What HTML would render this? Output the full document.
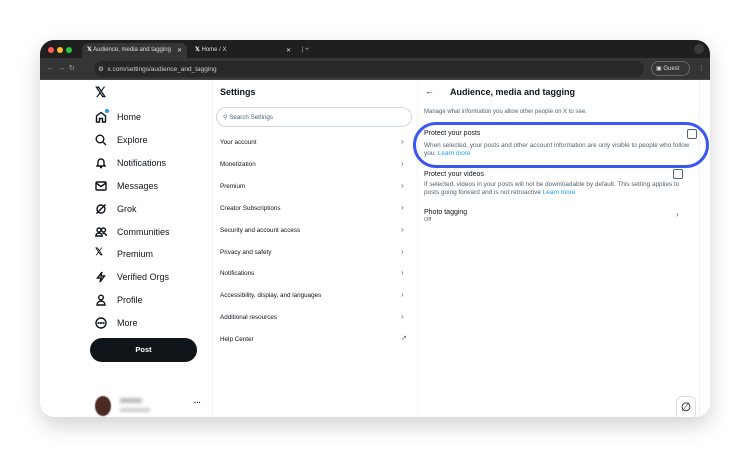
<!DOCTYPE html>
<html><head><style>
*{box-sizing:border-box;margin:0;padding:0}
body{width:750px;height:457px;background:#fff;font-family:"Liberation Sans",Arial,sans-serif;position:relative;overflow:hidden;color:#0f1419}
.win{position:absolute;left:40px;top:40px;width:670px;height:377px;border-radius:14px;overflow:hidden;background:#fff;box-shadow:0 8px 22px rgba(0,0,0,.18)}
.tabs{position:absolute;left:0;top:0;width:670px;height:18px;background:#1f1f1f}
.addr{position:absolute;left:0;top:18px;width:670px;height:22px;background:#353535;border-bottom:1px solid #444}
.dot{position:absolute;top:7px;width:6px;height:6px;border-radius:50%}
.tab{position:absolute;top:3px;height:15px;font-size:6px;color:#ddd;line-height:15px;overflow:hidden;white-space:nowrap}
.a{position:absolute;font-size:6.5px;white-space:nowrap}
.nav{position:absolute;left:77px;font-size:9px;color:#0f1419}
.set{position:absolute;left:180px;font-size:6.3px;color:#0f1419}
.chev{position:absolute;left:361px;font-size:8px;color:#536471}
svg{position:absolute;left:55px;width:12px;height:12px;fill:none;stroke:#0f1419;stroke-width:1.4}
</style></head><body>
<div class="win">
<div class="tabs">
<div class="dot" style="left:8px;background:#ff5f57"></div>
<div class="dot" style="left:17px;background:#febc2e"></div>
<div class="dot" style="left:26px;background:#28c840"></div>
<div class="tab" style="left:42px;width:105px;background:#353535;border-radius:6px 6px 0 0;padding-left:5px"><b style="color:#fff">𝕏</b> Audience, media and tagging</div>
<div class="a" style="left:137px;top:7px;color:#ddd;font-size:6px">✕</div>
<div class="tab" style="left:152px;width:105px;padding-left:3px"><b style="color:#fff">𝕏</b> Home / X</div>
<div class="a" style="left:246px;top:7px;color:#ddd;font-size:6px">✕</div>
<div class="tab" style="left:262px;color:#bbb">| +</div>
<div style="position:absolute;right:6px;top:4px;width:10px;height:10px;border-radius:50%;background:#3a3a3a"></div>
</div>
<div class="addr">
<div class="a" style="left:7px;top:6px;color:#aaa;font-size:7px">←&nbsp;&nbsp;→&nbsp;&nbsp;↻</div>
<div style="position:absolute;left:54px;top:3px;width:550px;height:16px;border-radius:8px;background:#282828"></div>
<div class="a" style="left:58px;top:7px;color:#ccc">⚙&nbsp; x.com/settings/audience_and_tagging</div>
<div style="position:absolute;left:611px;top:3px;width:39px;height:15px;border-radius:8px;border:1px solid #666"></div>
<div class="a" style="left:616px;top:7px;color:#ddd;font-size:6px">▣ Guest</div>
<div class="a" style="left:658px;top:6px;color:#aaa">⋮</div>
</div>
<div style="position:absolute;left:172px;top:40px;width:1px;height:337px;background:#eff3f4"></div>
<div style="position:absolute;left:377px;top:40px;width:1px;height:337px;background:#eff3f4"></div>
<div style="position:absolute;left:659px;top:40px;width:1px;height:337px;background:#eff3f4"></div>
<div class="a" style="left:55px;top:44px;font-size:14px;font-weight:bold">𝕏</div>
<svg style="top:71px" viewBox="0 0 12 12"><path d="M1.5 11V5L6 1.5 10.5 5V11H7.5V7.5H4.5V11Z"/></svg>
<div style="position:absolute;left:65px;top:69px;width:4px;height:4px;border-radius:50%;background:#1d9bf0"></div>
<div class="nav" style="top:72px">Home</div>
<svg style="top:94px" viewBox="0 0 12 12"><circle cx="5" cy="5" r="3.8"/><path d="M8 8l3 3"/></svg><div class="nav" style="top:95px">Explore</div>
<svg style="top:117px" viewBox="0 0 12 12"><path d="M2 9h8L9 7.5V5a3 3 0 0 0-6 0v2.5Z M5 10.5h2"/></svg><div class="nav" style="top:118px">Notifications</div>
<svg style="top:140px" viewBox="0 0 12 12"><rect x="1" y="2" width="10" height="8" rx="1"/><path d="M1 3l5 3.5L11 3"/></svg><div class="nav" style="top:141px">Messages</div>
<svg style="top:163px" viewBox="0 0 12 12"><circle cx="6" cy="6" r="4"/><path d="M10.5 1.5L1.5 10.5"/></svg><div class="nav" style="top:164px">Grok</div>
<svg style="top:186px" viewBox="0 0 12 12"><circle cx="4" cy="4" r="2"/><circle cx="8.5" cy="4" r="2"/><path d="M0.8 10a3.2 3 0 0 1 6.4 0Z M7.5 7.5a3 3 0 0 1 4 2.5"/></svg><div class="nav" style="top:187px">Communities</div>
<div class="a" style="left:55px;top:207px;font-size:10px;font-weight:bold">𝕏</div><div class="nav" style="top:209px">Premium</div>
<svg style="top:231px" viewBox="0 0 12 12"><path d="M7 1L2.5 7H6L5 11 9.5 5H6Z"/></svg><div class="nav" style="top:232px">Verified Orgs</div>
<svg style="top:254px" viewBox="0 0 12 12"><circle cx="6" cy="3.5" r="2.3"/><path d="M2 11a4 4 0 0 1 8 0Z"/></svg><div class="nav" style="top:255px">Profile</div>
<svg style="top:277px" viewBox="0 0 12 12"><circle cx="6" cy="6" r="5"/><circle cx="3.5" cy="6" r=".4"/><circle cx="6" cy="6" r=".4"/><circle cx="8.5" cy="6" r=".4"/></svg><div class="nav" style="top:278px">More</div>
<div style="position:absolute;left:50px;top:298px;width:107px;height:24px;border-radius:12px;background:#0f1419;color:#fff;font-size:7.5px;font-weight:bold;text-align:center;line-height:24px">Post</div>
<div style="position:absolute;left:55px;top:356px;width:16px;height:20px;border-radius:50%;background:#4a2a22;filter:blur(.6px)"></div>
<div style="position:absolute;left:80px;top:358px;width:22px;height:5px;background:#bbb;filter:blur(1.5px)"></div>
<div style="position:absolute;left:80px;top:368px;width:30px;height:4px;background:#ccc;filter:blur(1.5px)"></div>
<div class="a" style="left:154px;top:360px;font-size:7px;font-weight:bold">···</div>
<div class="a" style="left:180px;top:47px;font-size:9px;font-weight:bold">Settings</div>
<div style="position:absolute;left:176px;top:67px;width:196px;height:20px;border:1px solid #cfd9de;border-radius:10px"></div>
<div class="a" style="left:183px;top:74px;color:#536471;font-size:6.2px">⚲ Search Settings</div>
<div class="set" style="top:99px">Your account</div><div class="chev" style="top:97px">›</div>
<div class="set" style="top:121px">Monetization</div><div class="chev" style="top:119px">›</div>
<div class="set" style="top:143px">Premium</div><div class="chev" style="top:141px">›</div>
<div class="set" style="top:165px">Creator Subscriptions</div><div class="chev" style="top:163px">›</div>
<div class="set" style="top:187px">Security and account access</div><div class="chev" style="top:185px">›</div>
<div class="set" style="top:209px">Privacy and safety</div><div class="chev" style="top:207px">›</div>
<div class="set" style="top:230px">Notifications</div><div class="chev" style="top:228px">›</div>
<div class="set" style="top:252px">Accessibility, display, and languages</div><div class="chev" style="top:250px">›</div>
<div class="set" style="top:274px">Additional resources</div><div class="chev" style="top:272px">›</div>
<div class="set" style="top:296px">Help Center</div><div class="chev" style="top:294px;font-size:7px">↗</div>
<div class="a" style="left:385px;top:46px;font-size:9px">←</div>
<div class="a" style="left:410px;top:47px;font-size:9px;font-weight:bold">Audience, media and tagging</div>
<div class="a" style="left:384px;top:69px;color:#536471;font-size:6px">Manage what information you allow other people on X to see.</div>
<div class="a" style="left:384px;top:90px;font-size:7px">Protect your posts</div>
<div class="a" style="left:384px;top:102px;color:#536471;font-size:6.4px;line-height:7.5px">When selected, your posts and other account information are only visible to people who follow<br>you. <span style="color:#1d9bf0">Learn more</span></div>
<div style="position:absolute;left:647px;top:89px;width:10px;height:10px;border:1px solid #536471;border-radius:2px"></div>
<div class="a" style="left:384px;top:131px;font-size:7px">Protect your videos</div>
<div class="a" style="left:384px;top:141px;color:#536471;font-size:6.4px;line-height:7.5px">If selected, videos in your posts will not be downloadable by default. This setting applies to<br>posts going forward and is not retroactive <span style="color:#1d9bf0">Learn more</span></div>
<div style="position:absolute;left:633px;top:129px;width:10px;height:10px;border:1px solid #536471;border-radius:2px"></div>
<div class="a" style="left:384px;top:169px;font-size:7px">Photo tagging</div>
<div class="a" style="left:384px;top:177px;color:#536471;font-size:5.5px">Off</div>
<div class="chev" style="left:636px;top:170px">›</div>
<div style="position:absolute;left:373px;top:82px;width:296px;height:46px;border:3px solid #3a57f0;border-radius:23px"></div>
<div style="position:absolute;left:636px;top:356px;width:20px;height:24px;border:1px solid #ddd;border-radius:6px;background:#fff;font-size:12px;text-align:center;line-height:20px">∅</div>
</div>
</body></html>
